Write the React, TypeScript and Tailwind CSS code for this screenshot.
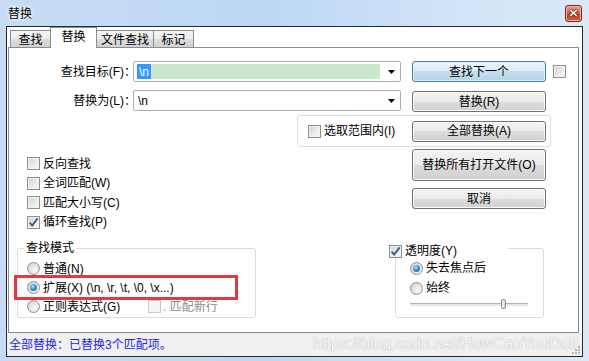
import clsx from "clsx";
import type { ReactNode } from "react";

const font = "font-['Liberation_Sans','Noto_Sans_CJK_SC',sans-serif]";

function Check({ checked = false, disabled = false }: { checked?: boolean; disabled?: boolean }) {
  return (
    <span
      className={clsx(
        "relative flex w-[13px] h-[13px] shrink-0 items-center justify-center border",
        disabled
          ? "border-[#c9c9c9] bg-[#f5f5f5]"
          : "border-[#8e8f8f] bg-[linear-gradient(135deg,#d3d3d3_0%,#ececec_60%,#fafafa_100%)] shadow-[inset_0_0_0_1px_#f3f3f3]"
      )}
    >
      {checked && (
        <svg width="11" height="11" viewBox="0 0 11 11" className="absolute left-[0px] top-[0px]">
          <path d="M1.6 5.6 L4.2 8.6 L9.6 1.4" fill="none" stroke="#3f5b98" strokeWidth="1.9" />
        </svg>
      )}
    </span>
  );
}

function Radio({ checked = false }: { checked?: boolean }) {
  return (
    <span className="flex w-[13px] h-[13px] shrink-0 items-center justify-center rounded-full border border-[#8e8f8f] bg-[radial-gradient(circle_at_65%_65%,#fbfbfb_0%,#e6e6e6_45%,#cdcdcd_100%)]">
      {checked && (
        <span className="w-[7px] h-[7px] rounded-full bg-[radial-gradient(circle_at_40%_35%,#b9e6fb_0%,#3a92cf_45%,#125487_100%)]" />
      )}
    </span>
  );
}

function Btn({ children, className, focused }: { children: ReactNode; className?: string; focused?: boolean }) {
  return (
    <div
      className={clsx(
        "flex w-[134px] shrink-0 items-center justify-center rounded-[3px] border text-[12px] leading-none text-black",
        focused
          ? "border-[#3c7fb1] bg-[linear-gradient(#eaf5fc_0%,#dcecf7_50%,#c6deee_50%,#b7d4e8_100%)] shadow-[inset_0_0_0_1px_#e4f2fb]"
          : "border-[#707070] bg-[linear-gradient(#f3f3f3_0%,#ebebeb_50%,#dddddd_50%,#d0d0d0_100%)] shadow-[inset_0_0_0_1px_#fbfbfb]",
        className
      )}
    >
      {children}
    </div>
  );
}

function Arrow() {
  return (
    <svg width="7" height="4" viewBox="0 0 7 4" className="shrink-0">
      <path d="M0 0 H7 L3.5 4 Z" fill="#000" />
    </svg>
  );
}

function Combo({ children }: { children: ReactNode }) {
  return (
    <div className="flex w-[268px] h-[21px] shrink-0 items-center rounded-[2px] border border-[#abadb3] bg-white pl-[3px] pr-[5px]">
      <div className="flex flex-1 items-center">{children}</div>
      <Arrow />
    </div>
  );
}

function CheckRow({ label, checked }: { label: string; checked?: boolean }) {
  return (
    <div className="flex h-[19.5px] items-center gap-[3px] pl-[18px]">
      <Check checked={checked} />
      <span className="leading-[14px]">{label}</span>
    </div>
  );
}

function Tab({ label, active, className }: { label: string; active?: boolean; className?: string }) {
  return (
    <div
      className={clsx(
        "flex items-center justify-center border border-b-0 border-[#898c95] text-[12px] leading-none",
        active
          ? "relative z-10 -mb-px h-[21px] bg-white pb-[2px]"
          : "h-[17px] bg-[linear-gradient(#f4f4f4_0%,#ececec_50%,#dedede_50%,#d2d2d2_100%)] pt-[1px]",
        className
      )}
    >
      {label}
    </div>
  );
}

export default function App() {
  return (
    <div
      className={clsx(
        font,
        "flex w-[589px] h-[361px] flex-col overflow-hidden text-[12px] text-black bg-[linear-gradient(90deg,#c7dcf2_0%,#bdd8f4_45%,#d3e5f8_80%,#dbe8f6_100%)]"
      )}
    >
      {/* title bar */}
      <div className="flex h-[26px] shrink-0 items-center justify-between pl-[8px] pr-[7px]">
        <span className="leading-none pt-[1px] [text-shadow:0_0_6px_#ffffff,0_0_3px_#ffffff]">替换</span>
        <div className="flex w-[17px] h-[17px] items-center justify-center rounded-[3px] border border-[#6e2c20] bg-[linear-gradient(#e6a08e_0%,#d56c52_45%,#c2432a_55%,#cf5a3e_100%)] shadow-[inset_0_0_0_1px_#eeb3a3]">
          <svg width="9" height="8" viewBox="0 0 9 8">
            <path d="M1 1 L8 7 M8 1 L1 7" stroke="#5a2418" strokeWidth="3" />
            <path d="M1.2 1.2 L7.8 6.8 M7.8 1.2 L1.2 6.8" stroke="#ffffff" strokeWidth="1.6" />
          </svg>
        </div>
      </div>

      {/* client */}
      <div className="ml-[6px] flex w-[577px] h-[331px] flex-col border border-[#2a2a2a] bg-white">
        {/* tabs */}
        <div className="flex h-[20px] shrink-0 items-end pl-[3px]">
          <Tab label="查找" className="w-[41px]" />
          <Tab label="替换" active className="-ml-px w-[47px]" />
          <Tab label="文件查找" className="-ml-px w-[58px]" />
          <Tab label="标记" className="-ml-px w-[41px]" />
        </div>

        {/* tab page */}
        <div className="ml-[1px] flex w-[571px] h-[286px] shrink-0 flex-col border border-[#898c95] bg-white pt-[13px]">
          {/* row 1 */}
          <div className="flex h-[21px] items-center">
            <span className="-mr-[3px] w-[127px] shrink-0 text-right leading-[14px]">查找目标(F)：</span>
            <Combo>
              <div className="flex w-[243px] h-[15px] items-center bg-[#cbe8cd]">
                <span className="flex h-[15px] items-center bg-[#3399ff] px-[2px] leading-none text-white">\n</span>
              </div>
            </Combo>
            <Btn focused className="ml-[11px] h-[21px]">查找下一个</Btn>
            <div className="ml-[7px]">
              <Check />
            </div>
          </div>

          {/* row 2 */}
          <div className="mt-[8px] flex h-[21px] items-center">
            <span className="-mr-[3px] w-[127px] shrink-0 text-right leading-[14px]">替换为(L)：</span>
            <Combo>
              <span className="pl-[1px] leading-none">\n</span>
            </Combo>
            <Btn className="ml-[11px] mt-[2px] h-[21px]">替换(R)</Btn>
          </div>

          {/* row 3: selection group */}
          <div className="ml-[288px] mt-[4px] flex w-[254px] h-[32px] items-center justify-between rounded-[3px] border border-[#d5dfe5] pl-[10px] pr-[4px]">
            <div className="flex items-center gap-[3px]">
              <Check />
              <span className="leading-[14px]">选取范围内(I)</span>
            </div>
            <Btn className="h-[21px]">全部替换(A)</Btn>
          </div>

          {/* lower section */}
          <div className="flex flex-1">
            {/* left column */}
            <div className="ml-[8px] flex w-[239px] flex-col pt-[7px]">
              <div className="-ml-[8px]">
                <CheckRow label="反向查找" />
                <CheckRow label="全词匹配(W)" />
                <CheckRow label="匹配大小写(C)" />
                <CheckRow label="循环查找(P)" checked />
              </div>

              <div className="relative mt-[16px] h-[70px] rounded-[3px] border border-[#d5dfe5] pl-[9px] pt-[10px]">
                <span className="absolute left-[6px] top-[-8px] bg-white px-[2px] leading-[14px]">查找模式</span>
                <div className="flex h-[19px] items-center gap-[3px]">
                  <Radio />
                  <span className="leading-[14px]">普通(N)</span>
                </div>
                <div className="flex h-[19px] items-center gap-[3px]">
                  <Radio checked />
                  <span className="leading-[14px]">扩展(X) (\n, \r, \t, \0, \x...)</span>
                </div>
                <div className="flex h-[19px] items-center">
                  <div className="flex w-[121px] items-center gap-[3px]">
                    <Radio />
                    <span className="leading-[14px]">正则表达式(G)</span>
                  </div>
                  <div className="flex items-center gap-[2px] text-[#8d8d8d]">
                    <Check disabled />
                    <span className="leading-[14px]">. 匹配新行</span>
                  </div>
                </div>
                {/* annotation */}
                <div className="absolute left-[-4px] top-[26px] w-[224px] h-[25px] border-[3px] border-[#e8383d]" />
              </div>
            </div>

            {/* right column */}
            <div className="ml-[133px] flex w-[162px] flex-col">
              <Btn className="ml-[23px] mt-[2px] h-[32px]">替换所有打开文件(O)</Btn>
              <Btn className="ml-[23px] mt-[7px] h-[21px]">取消</Btn>

              <div className="relative ml-[6px] mt-[39px] h-[70px] w-[149px] rounded-[3px] border border-[#d5dfe5] pt-[9px] pl-[14px]">
                <div className="absolute left-[-7px] top-[-5px] flex w-[119px] h-[14px] items-center gap-[3px] bg-white">
                  <Check checked />
                  <span className="leading-[14px]">透明度(Y)</span>
                </div>
                <div className="flex h-[20px] items-center gap-[3px]">
                  <Radio checked />
                  <span className="leading-[14px]">失去焦点后</span>
                </div>
                <div className="flex h-[20px] items-center gap-[3px]">
                  <Radio />
                  <span className="leading-[14px]">始终</span>
                </div>
                <div className="relative mt-[1px] flex h-[11px] w-[118px] items-center">
                  <div className="h-[3px] w-full border-t border-[#b4b4b4] bg-[#e7e7e7]" />
                  <div className="absolute left-[91px] top-[0px] h-[10px] w-[5px] rounded-[2px] border border-[#8a8a8a] bg-[linear-gradient(90deg,#f6f6f6,#d9d9d9)]" />
                </div>
              </div>
            </div>
          </div>
        </div>

        {/* status bar */}
        <div className="relative flex h-[23px] shrink-0 items-center overflow-hidden bg-[#f0f0f0] pl-[2px]">
          <span className="leading-[14px] text-[#1f1ff2]">全部替换：已替换3个匹配项。</span>
          <span className="absolute left-[306px] top-[1px] whitespace-nowrap font-['Liberation_Sans',sans-serif] text-[16px] leading-[20px] text-[#f7f7f7] [text-shadow:0_0_1px_#b8b8b8,0_0_1px_#c4c4c4]">
            https://blog.csdn.net/HowCanYouDoIt
          </span>
          <svg width="10" height="10" viewBox="0 0 10 10" className="absolute right-[1px] bottom-[1px]">
            <rect x="7" y="1" width="2" height="2" fill="#b7b7b7" />
            <rect x="4" y="4" width="2" height="2" fill="#b7b7b7" />
            <rect x="7" y="4" width="2" height="2" fill="#b7b7b7" />
            <rect x="1" y="7" width="2" height="2" fill="#b7b7b7" />
            <rect x="4" y="7" width="2" height="2" fill="#b7b7b7" />
            <rect x="7" y="7" width="2" height="2" fill="#b7b7b7" />
          </svg>
        </div>
      </div>
    </div>
  );
}
